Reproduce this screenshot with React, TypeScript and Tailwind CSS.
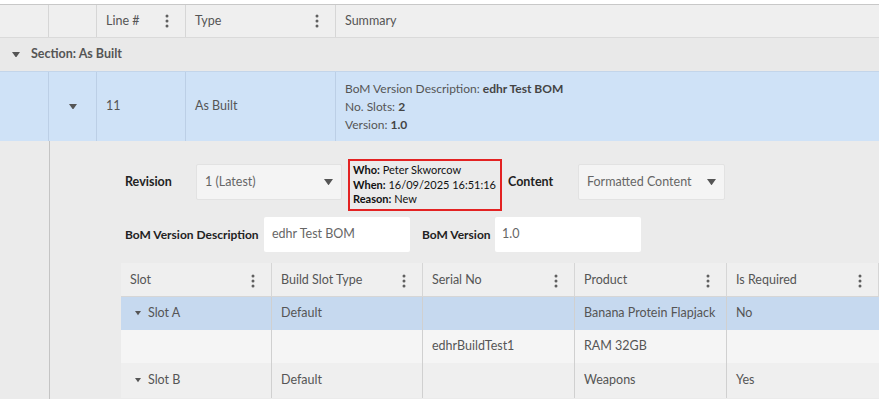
import React from "react";

const Kebab = () => (
  <svg width="4" height="14" viewBox="0 0 4 14" className="shrink-0">
    <circle cx="2" cy="2" r="1.5" fill="#5f5f5f" />
    <circle cx="2" cy="7" r="1.5" fill="#5f5f5f" />
    <circle cx="2" cy="12" r="1.5" fill="#5f5f5f" />
  </svg>
);

const Tri = ({ size = 8 }: { size?: number }) => (
  <svg width={size} height={size * 0.7} viewBox="0 0 10 7" className="shrink-0">
    <polygon points="0,0 10,0 5,7" fill="#555" />
  </svg>
);

const HeadCell = ({ w, label, extra = "" }: { w: string; label: string; extra?: string }) => (
  <div className={`${w} ${extra} flex items-center justify-between pl-[9px] pr-[16px] border-r border-[#d6d6d6]`}>
    <span>{label}</span>
    <Kebab />
  </div>
);

export default function App() {
  return (
    <div className="w-[879px] h-[399px] overflow-hidden bg-white pt-[4px] font-['Lato',sans-serif] text-[12.5px] text-[#555]">
      <div className="border-t border-[#c8c8c8]">
        {/* header */}
        <div className="flex h-[33px] bg-[#efefef] border-b border-[#dadada]">
          <div className="w-[49px] border-r border-[#d6d6d6]" />
          <div className="w-[48px] border-r border-[#d6d6d6]" />
          <HeadCell w="w-[89px]" label="Line #" />
          <HeadCell w="w-[150px]" label="Type" />
          <div className="flex-1 flex items-center pl-[9px]">Summary</div>
        </div>
        {/* section */}
        <div className="flex items-center h-[34px] bg-[#e9e9e9] border-b border-[#c3d5ea] pl-[12px] gap-[11px]">
          <Tri size={8} />
          <span className="font-bold">Section: As Built</span>
        </div>
        {/* data row */}
        <div className="flex h-[69px] bg-[#cfe2f7]">
          <div className="w-[49px] border-r border-[#bccfe6]" />
          <div className="w-[48px] border-r border-[#bccfe6] flex items-center justify-center">
            <Tri size={8} />
          </div>
          <div className="w-[89px] border-r border-[#bccfe6] flex items-center pl-[9px]">11</div>
          <div className="w-[150px] border-r border-[#bccfe6] flex items-center pl-[9px]">As Built</div>
          <div className="flex-1 flex flex-col justify-center pl-[9px] leading-[18px] text-[12px]">
            <div>
              BoM Version Description: <b className="text-[#444]">edhr Test BOM</b>
            </div>
            <div>
              No. Slots: <b className="text-[#444]">2</b>
            </div>
            <div>
              Version: <b className="text-[#444]">1.0</b>
            </div>
          </div>
        </div>
        {/* detail */}
        <div className="flex bg-[#ebebeb] h-[260px]">
          <div className="w-[50px] border-r border-[#c4c4c4]" />
          <div className="flex-1 flex flex-col">
            <div className="flex items-start h-[52px] mt-[18px] pl-[75px] text-[#222] whitespace-nowrap">
              <div className="w-[71px] h-[36px] mt-[5px] flex items-center font-bold">Revision</div>
              <div className="w-[146px] h-[36px] mt-[5px] bg-[#f4f4f4] rounded-[2px] border border-[#e2e2e2] flex items-center justify-between pl-[8px] pr-[8px] text-[#666]">
                <span>1 (Latest)</span>
                <Tri size={9} />
              </div>
              <div className="ml-[6px] w-[154px] h-[52px] border-2 border-[#e32222] flex flex-col justify-center pl-[3px] text-[11px] leading-[14.5px] text-[#111]">
                <div>
                  <b>Who:</b> Peter Skworcow
                </div>
                <div>
                  <b>When:</b> 16/09/2025 16:51:16
                </div>
                <div>
                  <b>Reason:</b> New
                </div>
              </div>
              <div className="ml-[6px] w-[70px] h-[36px] mt-[5px] flex items-center font-bold">Content</div>
              <div className="w-[147px] h-[36px] mt-[5px] bg-[#f4f4f4] rounded-[2px] border border-[#e2e2e2] flex items-center justify-between pl-[8px] pr-[8px] text-[#666]">
                <span>Formatted Content</span>
                <Tri size={9} />
              </div>
            </div>
            <div className="flex items-center h-[35px] mt-[6px] pl-[75px] text-[#222] whitespace-nowrap">
              <div className="w-[139px] font-bold text-[12px]">BoM Version Description</div>
              <div className="w-[146px] h-[35px] bg-white rounded-[2px] flex items-center pl-[8px] text-[#666]">edhr Test BOM</div>
              <div className="ml-[12px] w-[73px] font-bold text-[12px]">BoM Version</div>
              <div className="w-[146px] h-[35px] bg-white rounded-[2px] flex items-center pl-[7px] text-[#666]">1.0</div>
            </div>
            <div className="mt-[11px] ml-[71px] flex flex-col">
              <div className="flex h-[34px] bg-[#efefef] border-b border-[#d6d6d6]">
                <HeadCell w="w-[151px]" label="Slot" extra="pt-[2px]" />
                <HeadCell w="w-[151px]" label="Build Slot Type" extra="pt-[2px]" />
                <HeadCell w="w-[152px]" label="Serial No" extra="pt-[2px]" />
                <HeadCell w="w-[152px]" label="Product" extra="pt-[2px]" />
                <HeadCell w="w-[152px]" label="Is Required" extra="pt-[2px]" />
              </div>
              <div className="flex h-[33px] bg-[#c6d9ef]">
                <div className="w-[151px] border-r border-[#d0d0d0] flex items-center pl-[14px] gap-[7px]">
                  <Tri size={6} />
                  <span>Slot A</span>
                </div>
                <div className="w-[151px] border-r border-[#d0d0d0] flex items-center pl-[9px]">Default</div>
                <div className="w-[152px] border-r border-[#d0d0d0] flex items-center pl-[9px]" />
                <div className="w-[152px] border-r border-[#d0d0d0] flex items-center pl-[9px]">Banana Protein Flapjack</div>
                <div className="w-[152px] flex items-center pl-[9px]">No</div>
              </div>
              <div className="flex h-[33px] bg-[#f5f5f5]">
                <div className="w-[151px] border-r border-[#d0d0d0]" />
                <div className="w-[151px] border-r border-[#d0d0d0]" />
                <div className="w-[152px] border-r border-[#d0d0d0] flex items-center pl-[9px]">edhrBuildTest1</div>
                <div className="w-[152px] border-r border-[#d0d0d0] flex items-center pl-[9px]">RAM 32GB</div>
                <div className="w-[152px]" />
              </div>
              <div className="flex h-[35px] bg-[#efefef]">
                <div className="w-[151px] border-r border-[#d0d0d0] flex items-center pl-[14px] gap-[7px]">
                  <Tri size={6} />
                  <span>Slot B</span>
                </div>
                <div className="w-[151px] border-r border-[#d0d0d0] flex items-center pl-[9px]">Default</div>
                <div className="w-[152px] border-r border-[#d0d0d0]" />
                <div className="w-[152px] border-r border-[#d0d0d0] flex items-center pl-[9px]">Weapons</div>
                <div className="w-[152px] flex items-center pl-[9px]">Yes</div>
              </div>
            </div>
          </div>
        </div>
      </div>
    </div>
  );
}
